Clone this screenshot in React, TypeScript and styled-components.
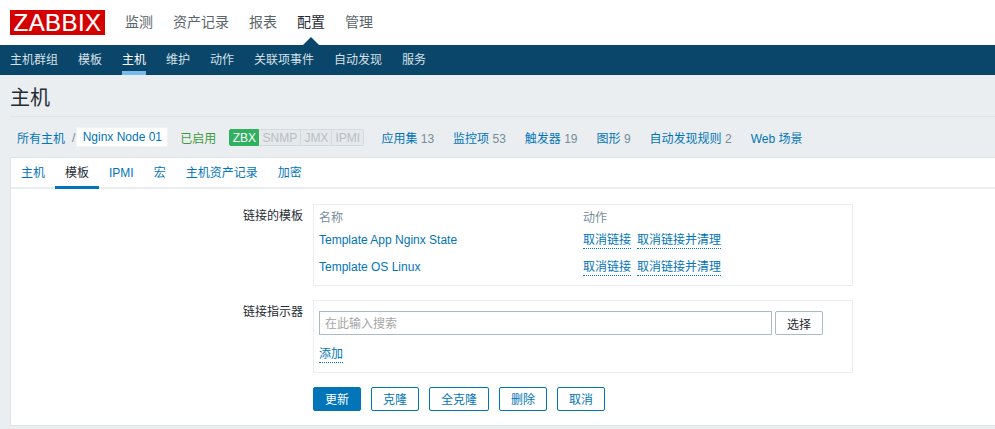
import React from "react";
import styled, { createGlobalStyle } from "styled-components";

const FONT = `Arial, "Liberation Sans", "Noto Sans CJK SC", sans-serif`;

const GlobalStyle = createGlobalStyle`
  html, body {
    margin: 0;
    padding: 0;
    background: #ebeef0;
    font-family: ${FONT};
    font-size: 12px;
    color: #1f2c33;
  }
  * { box-sizing: border-box; }
`;

const topMenu = ["监测", "资产记录", "报表", "配置", "管理"];
const subMenu = ["主机群组", "模板", "主机", "维护", "动作", "关联项事件", "自动发现", "服务"];
const hostLinks: [string, string][] = [
  ["应用集", "13"],
  ["监控项", "53"],
  ["触发器", "19"],
  ["图形", "9"],
  ["自动发现规则", "2"],
  ["Web 场景", ""],
];
const tabs = ["主机", "模板", "IPMI", "宏", "主机资产记录", "加密"];
const templates = ["Template App Nginx State", "Template OS Linux"];

const App = () => {
  return (
    <Page>
      <GlobalStyle />
      <TopBar>
        <Logo>ZABBIX</Logo>
        <TopNav>
          {topMenu.map((item) => (
            <TopItem key={item} $active={item === "配置"}>
              {item}
            </TopItem>
          ))}
        </TopNav>
      </TopBar>
      <SubBar>
        {subMenu.map((item) => (
          <SubItem key={item} $active={item === "主机"}>
            {item}
          </SubItem>
        ))}
      </SubBar>
      <Title>主机</Title>
      <HostNav>
        <Crumb>所有主机</Crumb>
        <Slash>/</Slash>
        <HostName>Nginx Node 01</HostName>
        <Enabled>已启用</Enabled>
        <Badges>
          <Badge $on $w={30}>ZBX</Badge>
          <Badge $w={42}>SNMP</Badge>
          <Badge $w={31}>JMX</Badge>
          <Badge $w={32}>IPMI</Badge>
        </Badges>
        <HostLinks>
          {hostLinks.map(([name, count]) => (
            <HostLink key={name}>
              {name}
              {count && <Count> {count}</Count>}
            </HostLink>
          ))}
        </HostLinks>
      </HostNav>
      <Card>
        <Tabs>
          {tabs.map((tab) => (
            <Tab key={tab} $active={tab === "模板"}>
              {tab}
            </Tab>
          ))}
        </Tabs>
        <Form>
          <Label>链接的模板</Label>
          <FieldBox $h={82}>
            <Row $h={23}>
              <NameHead>名称</NameHead>
              <ActionHead>动作</ActionHead>
            </Row>
            {templates.map((name) => (
              <Row $h={27} key={name}>
                <NameLink>{name}</NameLink>
                <Actions>
                  <Dotted>取消链接</Dotted>
                  <Dotted>取消链接并清理</Dotted>
                </Actions>
              </Row>
            ))}
          </FieldBox>
          <Label>链接指示器</Label>
          <FieldBox $h={73}>
            <SearchRow>
              <Search placeholder="在此输入搜索" readOnly />
              <SelectButton>选择</SelectButton>
            </SearchRow>
            <AddRow>
              <Dotted>添加</Dotted>
            </AddRow>
          </FieldBox>
          <span />
          <Buttons>
            <Primary>更新</Primary>
            <Outline>克隆</Outline>
            <Outline $wide>全克隆</Outline>
            <Outline>删除</Outline>
            <Outline>取消</Outline>
          </Buttons>
        </Form>
      </Card>
    </Page>
  );
};

export default App;

const Page = styled.div`
  width: 995px;
  height: 429px;
  overflow: hidden;
  display: flex;
  flex-direction: column;
`;

const TopBar = styled.div`
  height: 45px;
  flex: none;
  background: #fff;
  display: flex;
  align-items: flex-start;
  padding: 10px 0 0 10px;
`;

const Logo = styled.div`
  width: 95px;
  height: 25px;
  background: #d40000;
  color: #fff;
  font-size: 24px;
  line-height: 25px;
  letter-spacing: 0.4px;
  text-align: center;
  white-space: nowrap;
  -webkit-text-stroke: 0.2px #fff;
`;

const TopNav = styled.div`
  display: flex;
  gap: 20px;
  margin-left: 20px;
  padding-top: 3px;
`;

const TopItem = styled.div<{ $active?: boolean }>`
  position: relative;
  font-size: 14px;
  line-height: 18px;
  color: ${(p) => (p.$active ? "#1f2c33" : "#5a6469")};
  ${(p) =>
    p.$active &&
    `
    &::after {
      content: "";
      position: absolute;
      left: 50%;
      margin-left: -8px;
      top: 24px;
      border: 8px solid transparent;
      border-top: 0;
      border-bottom-color: #0a466a;
    }
  `}
`;

const SubBar = styled.div`
  height: 30px;
  flex: none;
  background: #0a466a;
  display: flex;
  gap: 20px;
  padding-left: 10px;
`;

const SubItem = styled.div<{ $active?: boolean }>`
  height: 30px;
  line-height: 30px;
  font-size: 12px;
  color: ${(p) => (p.$active ? "#fff" : "#d5e0e7")};
  border-bottom: 4px solid ${(p) => (p.$active ? "#76bbec" : "transparent")};
`;

const Title = styled.h1`
  height: 42px;
  flex: none;
  margin: 0 0 0 10px;
  padding-top: 10px;
  font-size: 20px;
  line-height: 26px;
  font-weight: 400;
  color: #1f2c33;
  border-bottom: 1px solid #dfe4e7;
`;

const HostNav = styled.div`
  height: 40px;
  flex: none;
  margin-left: 10px;
  display: flex;
  align-items: center;
  padding: 1px 0 0 7px;
`;

const Crumb = styled.span`
  color: #0275b8;
`;

const Slash = styled.span`
  margin-left: 7px;
  color: #768d99;
`;

const HostName = styled.span`
  height: 20px;
  width: 92px;
  margin: -1px 0 0 1px;
  background: #fff;
  border: 1px solid #f0f2f3;
  color: #0275b8;
  line-height: 18px;
  text-align: center;
  white-space: nowrap;
`;

const Enabled = styled.span`
  margin-left: 12px;
  color: #3c9a3c;
`;

const Badges = styled.div`
  display: flex;
  margin-left: 13px;
  height: 17px;
  margin-top: -1px;
`;

const Badge = styled.span<{ $on?: boolean; $w: number }>`
  width: ${(p) => p.$w}px;
  height: 17px;
  line-height: 17px;
  text-align: center;
  background: ${(p) => (p.$on ? "#2fb15f" : "#e6e9eb")};
  color: ${(p) => (p.$on ? "#fff" : "#b5c0c6")};
  border: 1px solid ${(p) => (p.$on ? "#2fb15f" : "#d5dadd")};
  border-left-width: ${(p) => (p.$on ? 1 : 0)}px;
  font-size: 12px;
  &:first-child {
    border-radius: 2px 0 0 2px;
  }
  &:last-child {
    border-radius: 0 2px 2px 0;
  }
`;

const HostLinks = styled.div`
  display: flex;
  gap: 19px;
  margin-left: 17px;
`;

const HostLink = styled.span`
  color: #0275b8;
  white-space: pre;
`;

const Count = styled.span`
  color: #768d99;
`;

const Card = styled.div`
  flex: 1;
  margin-left: 10px;
  margin-bottom: 3px;
  background: #fff;
  border: 1px solid #dfe4e7;
  border-width: 1px 0 1px 1px;
`;

const Tabs = styled.div`
  height: 31px;
  display: flex;
  border-bottom: 2px solid #ebeef0;
`;

const Tab = styled.div<{ $active?: boolean }>`
  height: 31px;
  padding: 0 10px;
  line-height: 30px;
  color: ${(p) => (p.$active ? "#1f2c33" : "#0275b8")};
  border-bottom: 3px solid ${(p) => (p.$active ? "#0275b8" : "transparent")};
`;

const Form = styled.div`
  display: grid;
  grid-template-columns: 292px 540px;
  column-gap: 10px;
  row-gap: 14px;
  padding-top: 15px;
`;

const Label = styled.div`
  text-align: right;
  line-height: 14px;
  padding-top: 5px;
`;

const FieldBox = styled.div<{ $h: number }>`
  height: ${(p) => p.$h}px;
  border: 1px solid #ebeef0;
  padding: 1px 5px;
`;

const Row = styled.div<{ $h: number }>`
  display: flex;
  height: ${(p) => p.$h}px;
  line-height: 23px;
`;

const NameHead = styled.span`
  width: 264px;
  color: #768d99;
  padding-top: 1px;
`;

const ActionHead = styled.span`
  color: #768d99;
  padding-top: 1px;
`;

const NameLink = styled.span`
  width: 264px;
  color: #0275b8;
`;

const Actions = styled.span`
  display: flex;
  gap: 6px;
  align-items: flex-start;
`;

const Dotted = styled.span`
  display: inline-block;
  height: 16px;
  margin-top: 4px;
  line-height: 15px;
  color: #0275b8;
  border-bottom: 1px dotted #0275b8;
`;

const SearchRow = styled.div`
  display: flex;
  gap: 3px;
  padding-top: 9px;
`;

const Search = styled.input`
  width: 453px;
  height: 24px;
  padding: 1px 5px 0;
  border: 1px solid #acbbc2;
  background: #fff;
  font-family: ${FONT};
  font-size: 12px;
  outline: none;
  &::placeholder {
    color: #a5a5a5;
    opacity: 1;
  }
`;

const SelectButton = styled.button`
  width: 48px;
  height: 24px;
  padding: 0;
  background: #fff;
  border: 1px solid #acbbc2;
  border-radius: 2px;
  font-family: ${FONT};
  font-size: 12px;
  color: #1f2c33;
`;

const AddRow = styled.div`
  padding-top: 8px;
`;

const Buttons = styled.div`
  display: flex;
  gap: 10px;
`;

const Primary = styled.button`
  width: 48px;
  height: 24px;
  padding: 0 0 1px;
  background: #0275b8;
  border: 1px solid #0275b8;
  border-radius: 2px;
  color: #fff;
  font-family: ${FONT};
  font-size: 12px;
`;

const Outline = styled.button<{ $wide?: boolean }>`
  width: ${(p) => (p.$wide ? 60 : 48)}px;
  height: 24px;
  padding: 0 0 1px;
  background: #fff;
  border: 1px solid #0275b8;
  border-radius: 2px;
  color: #0275b8;
  font-family: ${FONT};
  font-size: 12px;
`;
